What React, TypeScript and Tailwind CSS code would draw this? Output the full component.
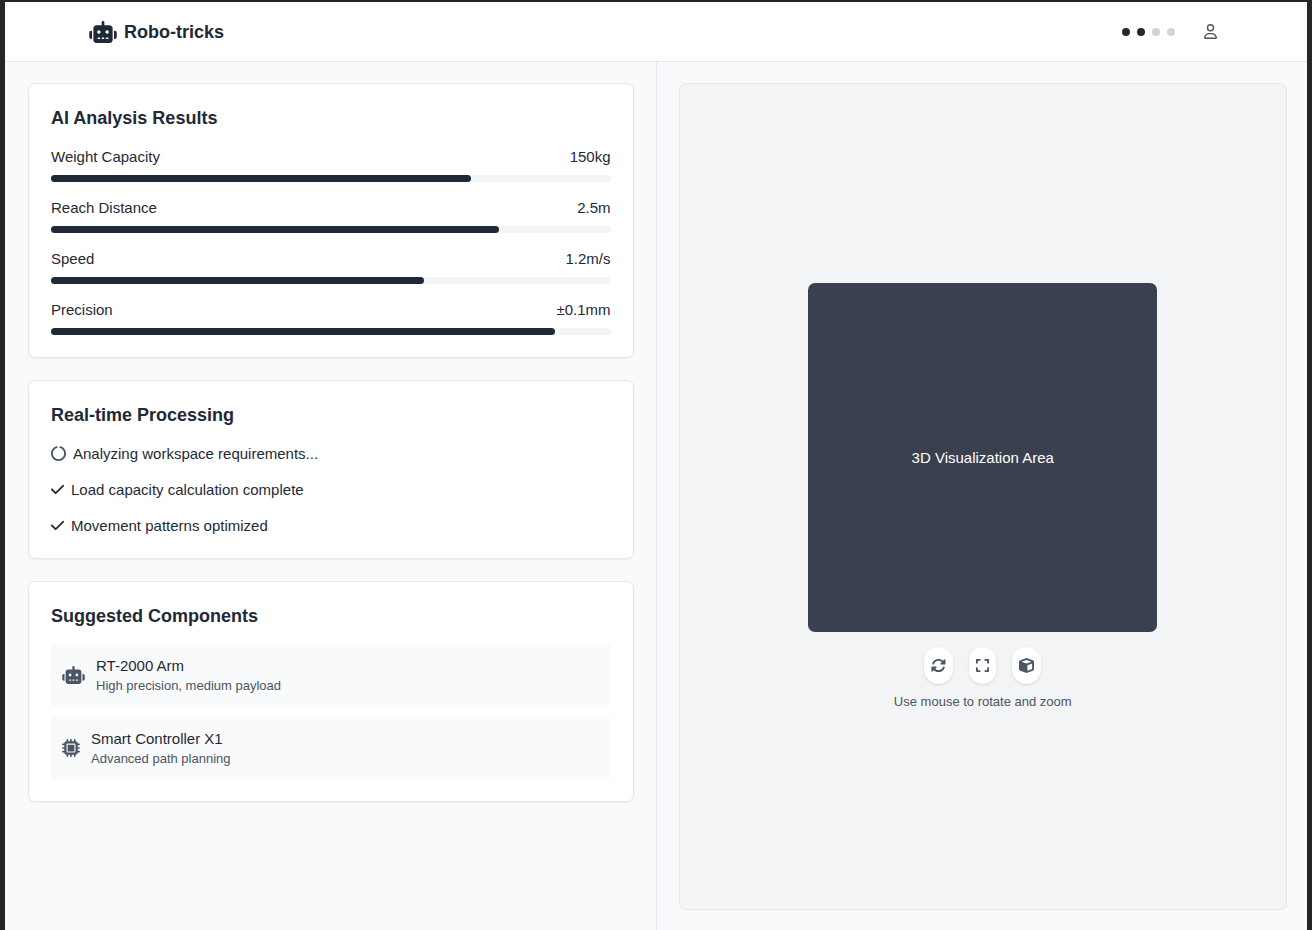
import React from "react";
import {
  FaRobot,
  FaMicrochip,
  FaRotate,
  FaExpand,
  FaCube,
  FaRegUser,
  FaCheck,
  FaCircleNotch,
} from "react-icons/fa6";

const metrics = [
  { label: "Weight Capacity", value: "150kg", percent: 75 },
  { label: "Reach Distance", value: "2.5m", percent: 80 },
  { label: "Speed", value: "1.2m/s", percent: 66.6 },
  { label: "Precision", value: "±0.1mm", percent: 90 },
];

const steps = [
  { text: "Analyzing workspace requirements...", done: false },
  { text: "Load capacity calculation complete", done: true },
  { text: "Movement patterns optimized", done: true },
];

function Card({ title, children }: { title: string; children: React.ReactNode }) {
  return (
    <section className="rounded-[7px] border border-gray-200 bg-white p-[22px] shadow-xs">
      <h2 className="mb-[16px] text-[18px] leading-[24px] font-bold">{title}</h2>
      {children}
    </section>
  );
}

function Component({
  icon,
  name,
  detail,
}: {
  icon: React.ReactNode;
  name: string;
  detail: string;
}) {
  return (
    <li className="flex items-center gap-[11px] rounded-[4px] bg-[#f9fafb] p-[11px] text-[#4b5563]">
      {icon}
      <div>
        <h3 className="text-[#1f2937]">{name}</h3>
        <p className="text-[13px] leading-[19px]">{detail}</p>
      </div>
    </li>
  );
}

function ViewButton({ label, children }: { label: string; children: React.ReactNode }) {
  return (
    <button
      type="button"
      aria-label={label}
      className="flex h-[37px] items-center rounded-full bg-white px-[7px] text-[#4b5563] shadow-sm"
    >
      {children}
    </button>
  );
}

export default function App() {
  return (
    <div className="flex min-h-screen flex-col bg-[#252528] px-[5px] pt-[2px] font-['Liberation_Sans',Arial,sans-serif] text-[15px] leading-[21px] text-[#1f2937]">
      <header className="border-b border-gray-200 bg-white pl-[1px]">
        <div className="mx-auto flex h-[59px] max-w-[1165px] items-center justify-between px-[15px]">
          <div className="flex items-center gap-[7px]">
            <FaRobot className="h-[22px] w-[28px]" />
            <h1 className="text-[18px] leading-[24px] font-bold">Robo-tricks</h1>
          </div>
          <div className="flex items-center gap-[22px]">
            <div className="flex gap-[7px]">
              <span className="size-[8px] rounded-full bg-[#1f2937]" />
              <span className="size-[8px] rounded-full bg-[#1f2937]" />
              <span className="size-[8px] rounded-full bg-[#d1d5db]" />
              <span className="size-[8px] rounded-full bg-[#d1d5db]" />
            </div>
            <button type="button" aria-label="Account" className="p-[7px] text-[#4b5563]">
              <FaRegUser className="h-[15px] w-[13px]" />
            </button>
          </div>
        </div>
      </header>

      <main className="grid flex-1 grid-cols-2 bg-[#f9fafb] pl-[1px]">
        <div className="flex flex-col gap-[22px] border-r border-gray-200 px-[22px] py-[21px]">
          <Card title="AI Analysis Results">
            <div className="flex flex-col gap-[15px]">
              {metrics.map((m) => (
                <div key={m.label}>
                  <div className="mb-[8px] flex justify-between">
                    <span>{m.label}</span>
                    <span>{m.value}</span>
                  </div>
                  <div className="h-[7px] rounded-full bg-[#f3f4f6]">
                    <div
                      className="h-full rounded-full bg-[#1f2937]"
                      style={{ width: `${m.percent}%` }}
                    />
                  </div>
                </div>
              ))}
            </div>
          </Card>

          <Card title="Real-time Processing">
            <ul className="flex flex-col gap-[15px]">
              {steps.map((s) => (
                <li key={s.text} className="flex items-center gap-[7px]">
                  {s.done ? (
                    <FaCheck className="h-[15px] w-[13px]" />
                  ) : (
                    <FaCircleNotch className="size-[15px] text-[#4b5563]" />
                  )}
                  <span>{s.text}</span>
                </li>
              ))}
            </ul>
          </Card>

          <Card title="Suggested Components">
            <ul className="flex flex-col gap-[11px]">
              <Component
                icon={<FaRobot className="h-[18px] w-[23px]" />}
                name="RT-2000 Arm"
                detail="High precision, medium payload"
              />
              <Component
                icon={<FaMicrochip className="size-[18px]" />}
                name="Smart Controller X1"
                detail="Advanced path planning"
              />
            </ul>
          </Card>
        </div>

        <div className="flex flex-col pt-[21px] pr-[20px] pb-[20px] pl-[22px]">
          <section className="flex flex-1 flex-col items-center justify-center rounded-[7px] border border-gray-200 bg-[#f3f4f6]">
            <div className="flex size-[349px] items-center justify-center rounded-[7px] bg-[#3b4050] text-white">
              3D Visualization Area
            </div>
            <div className="mt-[15px] flex gap-[16px]">
              <ViewButton label="Rotate">
                <FaRotate className="size-[15px]" />
              </ViewButton>
              <ViewButton label="Expand">
                <FaExpand className="h-[15px] w-[13px]" />
              </ViewButton>
              <ViewButton label="Toggle 3D view">
                <FaCube className="size-[15px]" />
              </ViewButton>
            </div>
            <p className="mt-[8px] text-[13px] leading-[19px] text-[#4b5563]">
              Use mouse to rotate and zoom
            </p>
          </section>
        </div>
      </main>
    </div>
  );
}
